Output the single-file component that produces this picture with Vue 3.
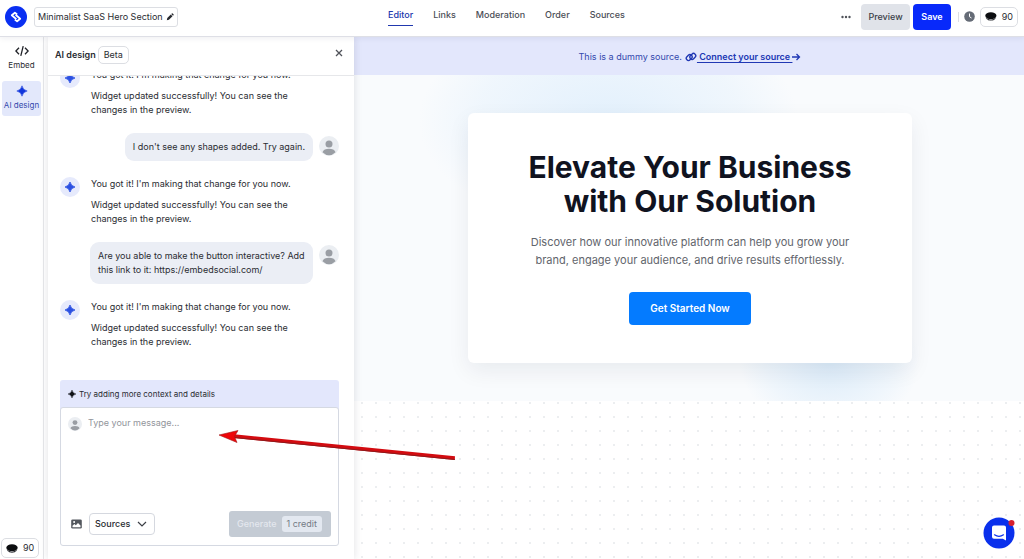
<script setup>
import { ref } from 'vue'

const tabs = ['Editor', 'Links', 'Moderation', 'Order', 'Sources']
const title = ref('Minimalist SaaS Hero Section')
const draft = ref('')
const source = ref('Sources')
const reply = {
  from: 'bot',
  lines: [
    "You got it! I'm making that change for you now.",
    'Widget updated successfully! You can see the changes in the preview.',
  ],
}
const messages = [
  reply,
  { from: 'user', lines: ["I don't see any shapes added. Try again."] },
  reply,
  { from: 'user', lines: ['Are you able to make the button interactive? Add this link to it: https://embedsocial.com/'] },
  reply,
]
</script>

<template>
  <div class="app">
    <header class="topbar">
      <div class="brand">
        <svg class="logo" viewBox="0 0 22 22" aria-hidden="true">
          <circle cx="11" cy="11" r="11" fill="#0a2ff2" />
          <path d="M12.200 8.400 9.900 6.700 6.800 9.300l4.600 3.900M9.800 13.600l2.300 1.700 3.100-2.600-4.600-3.900" fill="none" stroke="#fff" stroke-width="1.800" stroke-linejoin="round" />
        </svg>
        <div class="title-field">
          <input v-model="title" class="title-input" aria-label="Widget name" />
          <svg class="pencil" viewBox="0 0 10 10" aria-hidden="true">
            <path d="M1 9l.6-2.7L6 1.900l2.100 2.100-4.400 4.400zM6.600 1.300l.7-.7q.5-.4 1 0l1.100 1.100q.4.5 0 1l-.7.7z" fill="#26282e" />
          </svg>
        </div>
      </div>
      <nav class="tabs">
        <a v-for="(t, i) in tabs" :key="t" href="#" :class="['tab', { active: i === 0 }]">{{ t }}</a>
      </nav>
      <div class="actions">
        <button class="more" aria-label="More">
          <svg viewBox="0 0 10 4"><circle cx="1.500" cy="2" r="1.200" /><circle cx="5" cy="2" r="1.200" /><circle cx="8.500" cy="2" r="1.200" /></svg>
        </button>
        <button class="btn preview">Preview</button>
        <button class="btn save">Save</button>
        <span class="divider"></span>
        <button class="history" aria-label="History">
          <svg viewBox="0 0 11 11"><circle cx="5.500" cy="5.500" r="5.300" fill="#656b76" /><path d="M5.500 2.500v3.200l2 1.300" fill="none" stroke="#fff" stroke-width="1" /></svg>
        </button>
        <button class="credits">
          <svg viewBox="0 0 12 9" aria-hidden="true"><ellipse cx="6" cy="3.700" rx="5.700" ry="3.500" fill="#0c0d10" /><path d="M.6 5.300q5.400 4.800 10.800 0L9.800 7.800q-3.800 1.800-7.600 0z" fill="#25272c" /><path d="M2.500 7.200v1M4.800 7.800v.9M7.200 7.800v.9M9.500 7.200v1" stroke="#fff" stroke-width=".4" /></svg>
          <span>90</span>
        </button>
      </div>
    </header>

    <div class="body">
      <aside class="rail">
        <div class="rail-items">
          <button class="rail-item">
            <svg viewBox="0 0 14 12" aria-hidden="true"><path d="M4 2.800.9 6 4 9.200M10 2.800 13.100 6 10 9.200M8.200 1.200 5.800 10.800" fill="none" stroke="#202228" stroke-width="1.300" /></svg>
            <span>Embed</span>
          </button>
          <button class="rail-item selected">
            <svg viewBox="0 0 14 12" aria-hidden="true"><path d="M7 .8Q7.900 5.100 12.200 6 7.900 6.900 7 11.200 6.100 6.900 1.800 6 6.100 5.100 7 .8z" fill="#1237dc" stroke="#1237dc" stroke-width=".5" /></svg>
            <span>AI design</span>
          </button>
        </div>
        <button class="credits">
          <svg viewBox="0 0 12 9" aria-hidden="true"><ellipse cx="6" cy="3.700" rx="5.700" ry="3.500" fill="#0c0d10" /><path d="M.6 5.300q5.400 4.800 10.800 0L9.800 7.800q-3.800 1.800-7.600 0z" fill="#25272c" /><path d="M2.500 7.200v1M4.800 7.800v.9M7.200 7.800v.9M9.500 7.200v1" stroke="#fff" stroke-width=".4" /></svg>
          <span>90</span>
        </button>
      </aside>

      <section class="panel">
        <div class="panel-head">
          <h2>AI design</h2>
          <span class="beta">Beta</span>
          <button class="close" aria-label="Close">
            <svg viewBox="0 0 8 8"><path d="M1 1l6 6M7 1 1 7" stroke="#50535a" stroke-width="1.300" /></svg>
          </button>
        </div>

        <div class="chat">
          <div v-for="(m, i) in messages" :key="i" :class="['msg', m.from]">
            <svg v-if="m.from === 'bot'" class="avatar" viewBox="0 0 20 20" aria-hidden="true">
              <circle cx="10" cy="10" r="10" fill="#e6eafc" />
              <path d="M10 5Q10.900 9.100 15 10 10.900 10.900 10 15 9.100 10.900 5 10 9.100 9.100 10 5z" fill="#2b50e2" stroke="#2b50e2" stroke-width=".8" />
            </svg>
            <div class="text">
              <p v-for="line in m.lines" :key="line">{{ line }}</p>
            </div>
            <svg v-if="m.from === 'user'" class="avatar" viewBox="0 0 20 20" aria-hidden="true">
              <circle cx="10" cy="10" r="10" fill="#ebeef2" />
              <circle cx="10" cy="8" r="3.500" fill="#9a9ea4" />
              <path d="M3.500 16.200c1-4.600 12-4.600 13 0Q10 22.400 3.500 16.200z" fill="#9a9ea4" />
            </svg>
          </div>
        </div>

        <form class="composer" @submit.prevent>
          <div class="hint">
            <svg viewBox="0 0 8 8" aria-hidden="true"><path d="M4 0Q4.700 3.300 8 4 4.700 4.700 4 8 3.300 4.700 0 4 3.300 3.300 4 0z" fill="#101216" stroke="#101216" stroke-width=".4" /></svg>
            <span>Try adding more context and details</span>
          </div>
          <div class="box">
            <div class="entry">
              <svg class="mini" viewBox="0 0 20 20" aria-hidden="true">
                <circle cx="10" cy="10" r="10" fill="#ebeef2" />
                <circle cx="10" cy="8" r="3.500" fill="#9a9ea4" />
                <path d="M3.500 16.200c1-4.600 12-4.600 13 0Q10 22.400 3.500 16.200z" fill="#9a9ea4" />
              </svg>
              <textarea v-model="draft" aria-label="Message" placeholder="Type your message..."></textarea>
            </div>
            <div class="tools">
              <button type="button" class="image" aria-label="Add image">
                <svg viewBox="0 0 11 10"><rect x=".2" y=".4" width="10.600" height="9.200" rx="1.400" fill="#53575e" /><path d="M1.500 8.300v-1.500l1.900-1.900 1.400 1.400 2.200-2.300 2.500 2.600v1.700z" fill="#fff" /><circle cx="3.100" cy="3" r="1" fill="#fff" /></svg>
              </button>
              <div class="select-wrap">
                <select v-model="source" aria-label="Sources">
                  <option>Sources</option>
                </select>
                <svg viewBox="0 0 10 6" aria-hidden="true"><path d="M1 1l4 4 4-4" fill="none" stroke="#3c3f46" stroke-width="1.200" /></svg>
              </div>
              <button class="generate" disabled>
                <span>Generate</span>
                <span class="cost">1 credit</span>
              </button>
            </div>
          </div>
        </form>
      </section>

      <main class="stage">
        <div class="notice">
          <span>This is a dummy source.</span>
          <a href="#">
            <svg class="chain" viewBox="0 0 12 10" aria-hidden="true"><g fill="none" stroke="#2038b4" stroke-width="1.400"><rect x="1" y="3.400" width="6.400" height="4.400" rx="2.200" transform="rotate(-45 4.200 5.600)" /><rect x="4.600" y="2.200" width="6.400" height="4.400" rx="2.200" transform="rotate(-45 7.800 4.400)" /></g></svg>
            <span>&nbsp;Connect your source&nbsp;</span>
            <svg class="arrow" viewBox="0 0 9 8" aria-hidden="true"><path d="M0 4h7.500M4.500 1l3 3-3 3" fill="none" stroke="#2038b4" stroke-width="1.300" /></svg>
          </a>
        </div>
        <div class="hero">
          <article class="card">
            <h1>Elevate Your Business with Our Solution</h1>
            <p>Discover how our innovative platform can help you grow your brand, engage your audience, and drive results effortlessly.</p>
            <a class="cta" href="https://embedsocial.com/">Get Started Now</a>
          </article>
        </div>
      </main>
    </div>

    <svg class="pointer" viewBox="0 0 240 36" aria-hidden="true">
      <path d="M16 8.300 237 30.300 236.800 34 15.700 12z" fill="#d30b10" />
      <path d="M16 11.500 236.800 33.500" stroke="#8f1a1c" stroke-width="1" />
      <path d="M1 9 20 4.500 16.500 10.500 19 16.500z" fill="#ee0509" stroke="#a01518" stroke-width=".6" />
    </svg>

    <button class="chat-bubble" aria-label="Open messenger">
      <svg viewBox="0 0 32 32">
        <circle cx="16" cy="16" r="15.500" fill="#0a30ec" />
        <path d="M11 8.500h10q2 0 2 2v13l-3.200-1.700H11q-2 0-2-2v-9.300q0-2 2-2z" fill="#fff" />
        <path d="M11.500 17.800q4.500 3 9 0" fill="none" stroke="#0a30ec" stroke-width="1.200" stroke-linecap="round" />
        <circle cx="28.500" cy="6" r="3" fill="#d6202e" />
      </svg>
    </button>
  </div>
</template>

<style>
html, body, #app { height: 100%; }
body { overflow: hidden; }
</style>

<style scoped>
* { box-sizing: border-box; }
.app {
  position: relative;
  display: flex;
  flex-direction: column;
  height: 100vh;
  background: #fff;
  color: #2a2c32;
  font-family: Inter, "Liberation Sans", sans-serif;
  font-size: 9px;
  line-height: 14px;
}
button, input, select, textarea { font: inherit; color: inherit; margin: 0; padding: 0; border: 0; background: none; }
button svg { display: block; }
h1, h2, p { margin: 0; }
a { color: inherit; text-decoration: none; }

.topbar {
  position: relative;
  z-index: 3;
  display: grid;
  grid-template-columns: 1fr auto 1fr;
  align-items: center;
  height: 37px;
  flex: none;
  padding: 0 6px 3px 5px;
  background: #fff;
  border-bottom: 1px solid #dedfe6;
  box-shadow: 0 1px 6px rgba(30, 30, 60, 0.08);
}
.brand { display: flex; align-items: center; gap: 7px; }
.logo { width: 22px; height: 22px; }
.title-field { display: flex; align-items: center; height: 20px; padding: 0 3px; border: 1px solid #dcdee3; border-radius: 3px; }
.title-input { width: 128px; height: 18px; outline: none; }
.pencil { width: 8px; height: 8px; }
.tabs { display: flex; gap: 20px; margin-right: 10px; padding-bottom: 1px; }
.tab { padding: 1px 0 3px; color: #4b4e56; font-weight: 500; border-bottom: 1px solid transparent; }
.tab.active { color: #2138ae; border-color: #2138ae; }
.actions { display: flex; align-items: center; justify-content: flex-end; }
.more { margin-right: 10px; }
.more svg { width: 10px; height: 4px; fill: #50535a; }
.btn { height: 26px; border-radius: 4px; font-weight: 500; }
.preview { width: 49px; background: #e0e3e9; color: #3c3f48; margin-right: 3px; }
.save { width: 38px; background: #0829fa; color: #fff; font-weight: 600; }
.divider { width: 1px; height: 10px; margin: 0 5px 0 7px; background: #dcdee3; }
.history { margin-right: 5px; }
.history svg { width: 11px; height: 11px; }
.actions .credits { width: 38px; }
.credits { display: flex; align-items: center; gap: 5px; height: 20px; padding: 0 4px; border: 1px solid #dcdee3; border-radius: 5px; background: #fff; }
.credits svg { width: 12px; height: 9px; }

.body { flex: 1; min-height: 0; display: flex; }
.rail {
  width: 44px;
  flex: none;
  display: flex;
  flex-direction: column;
  justify-content: space-between;
  align-items: flex-start;
  padding: 4px 2px 1px 1px;
  border-right: 1px solid #e6e7ea;
}
.rail-items { align-self: stretch; display: flex; flex-direction: column; gap: 5px; padding-left: 1px; font-size: 8px; }
.rail-item { display: flex; flex-direction: column; align-items: center; gap: 1px; padding: 4px 0; border-radius: 3px; white-space: nowrap; }
.rail-item svg { width: 14px; height: 12px; }
.rail-item.selected { background: #e3e8fb; color: #3549ad; }

.panel {
  position: relative;
  z-index: 2;
  width: 306px;
  flex: none;
  margin-left: 4px;
  display: flex;
  flex-direction: column;
  background: #fff;
  box-shadow: 0 0 8px rgba(20, 20, 50, 0.13);
}
.panel-head { display: flex; align-items: center; gap: 2px; height: 39px; flex: none; padding: 0 11px 2px 7px; border-bottom: 1px solid #e6e7ea; }
.panel-head h2 { font-size: 9px; font-weight: 600; }
.beta { padding: 1px 5px; border: 1px solid #dcdee3; border-radius: 5px; }
.close { margin: 0 0 4px auto; }
.close svg { width: 8px; height: 8px; }

.chat { flex: 1; min-height: 0; overflow: hidden; display: flex; flex-direction: column; justify-content: flex-end; gap: 16px; padding: 0 15px 31px 12px; }
.msg { display: flex; flex: none; align-items: flex-start; }
.bot { gap: 11px; }
.bot .text { display: flex; flex-direction: column; gap: 7px; max-width: 212px; }
.avatar { width: 20px; height: 20px; flex: none; }
.user { justify-content: flex-end; gap: 6px; }
.user .text { max-width: 223px; padding: 7px 8px; background: #ebeef5; border-radius: 9px; }
.user .avatar { margin-top: 3px; }

.composer { flex: none; padding: 0 15px 13px 12px; }
.hint { display: flex; align-items: center; gap: 3px; height: 30px; padding: 0 8px 3px; background: #e3e7fc; border-radius: 3px 3px 0 0; font-size: 8px; }
.hint svg { width: 8px; height: 8px; }
.box { margin-top: -3px; display: flex; flex-direction: column; height: 139px; padding: 8px 7px; background: #fff; border: 1px solid #d5d9e2; border-radius: 3px; }
.entry { flex: 1; display: flex; gap: 6px; align-items: flex-start; }
.mini { width: 14px; height: 14px; flex: none; margin-top: 1px; }
textarea { flex: 1; align-self: stretch; resize: none; outline: none; }
textarea::placeholder { color: #92959b; opacity: 1; }
.tools { display: flex; align-items: center; padding-left: 3px; }
.image svg { width: 11px; height: 10px; }
.select-wrap { position: relative; margin-left: 7px; }
select { appearance: none; width: 66px; height: 22px; padding: 0 5px; border: 1px solid #d5d8df; border-radius: 4px; font-weight: 500; background: #fff; }
.select-wrap svg { position: absolute; right: 8px; top: 8px; width: 10px; height: 6px; pointer-events: none; }
.generate { margin-left: auto; display: flex; align-items: center; gap: 5px; height: 26px; padding: 0 9px 0 8px; border-radius: 3px; background: #c4cbd4; color: #e3e7ee; font-weight: 500; }
.cost { padding: 1px 5px; border-radius: 3px; background: #e3e8f0; color: #747a84; font-weight: 400; }

.stage {
  flex: 1;
  min-width: 0;
  background-color: #fff;
  background-image: radial-gradient(circle, #eceef0 0, #eceef0 1px, transparent 1px);
  background-size: 14px 14px;
  background-position: 1px 9px;
}
.notice { display: flex; justify-content: center; align-items: center; gap: 3px; height: 38px; padding: 1px 0 0 2px; background: #e3e7fc; color: #3349ad; }
.notice a { display: flex; align-items: center; font-weight: 600; color: #2038b4; }
.notice a span { text-decoration: underline; text-underline-offset: 2px; }
.chain { width: 12px; height: 10px; }
.arrow { width: 9px; height: 8px; }
.hero {
  display: flex;
  justify-content: center;
  padding: 38px 23px 38px 25px;
  background:
    radial-gradient(ellipse 190px 110px at 38% 14%, rgba(208, 231, 252, 0.55), rgba(222, 238, 252, 0.35) 70%, transparent 100%),
    radial-gradient(ellipse 90px 70px at 71% 88%, rgba(200, 225, 246, 0.6), rgba(220, 236, 250, 0.35) 70%, transparent 100%),
    #f9fbfd;
}
.card { width: 100%; max-width: 444px; padding: 37px 50px 38px; text-align: center; background: #fff; border-radius: 6px; box-shadow: 0 8px 22px rgba(20, 30, 50, 0.07); }
h1 { font-size: 30px; line-height: 34px; font-weight: 700; color: #10131f; }
.card p { margin-top: 15px; font-size: 11px; line-height: 18px; color: #62656c; }
.cta { display: inline-block; margin-top: 23px; padding: 8px 21px 9px; font-size: 10px; line-height: 16px; font-weight: 600; color: #fff; background: #047bff; border-radius: 4px; }

.pointer { position: absolute; z-index: 5; left: 218px; top: 426px; width: 240px; height: 36px; pointer-events: none; }
.chat-bubble { position: absolute; z-index: 5; right: 9px; bottom: 10px; width: 32px; height: 32px; border-radius: 50%; }
.chat-bubble svg { width: 32px; height: 32px; overflow: visible; }
</style>
